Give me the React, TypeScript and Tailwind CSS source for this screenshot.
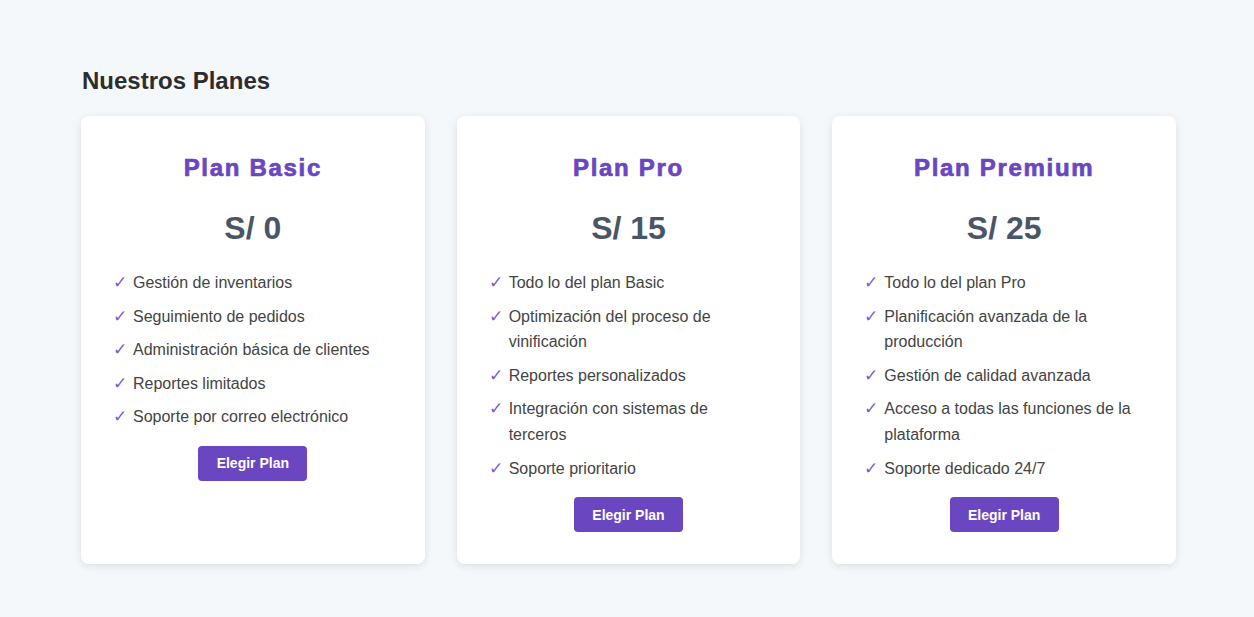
import React from "react";

interface Plan {
    name: string;
    price: string;
    features: string[];
}

const plans: Plan[] = [
    {
        name: "Plan Basic",
        price: "S/ 0",
        features: [
            "Gestión de inventarios",
            "Seguimiento de pedidos",
            "Administración básica de clientes",
            "Reportes limitados",
            "Soporte por correo electrónico",
        ],
    },
    {
        name: "Plan Pro",
        price: "S/ 15",
        features: [
            "Todo lo del plan Basic",
            "Optimización del proceso de vinificación",
            "Reportes personalizados",
            "Integración con sistemas de terceros",
            "Soporte prioritario",
        ],
    },
    {
        name: "Plan Premium",
        price: "S/ 25",
        features: [
            "Todo lo del plan Pro",
            "Planificación avanzada de la producción",
            "Gestión de calidad avanzada",
            "Acceso a todas las funciones de la plataforma",
            "Soporte dedicado 24/7",
        ],
    },
];

const PlanCard = ({ plan }: { plan: Plan }) => {
    return (
        <div className="bg-white rounded-lg shadow-[0_2px_8px_rgba(0,0,0,0.1)] px-8 pt-[38px] pb-8 flex flex-col items-center">
            <h3 className="text-[24px] leading-[28px] font-bold tracking-[1.7px] text-[#6b46c1] [-webkit-text-stroke:0.7px_#6b46c1]">
                {plan.name}
            </h3>
            <div className="mt-[27px] text-[32px] leading-[38px] font-bold text-[#4a5568]">{plan.price}</div>
            <ul className="mt-[23px] w-full">
                {plan.features.map((f) => (
                    <li key={f} className="flex text-[16px] leading-[25.6px] text-[#444] mb-2">
                        <span className="w-5 shrink-0 text-[#7c5cd6] text-[17px] font-['DejaVu_Sans',sans-serif] font-light">✓</span>
                        <span>{f}</span>
                    </li>
                ))}
            </ul>
            <button className="mt-2 bg-[#6b46c1] text-white font-bold text-[14px] leading-[16px] w-[109px] h-[35px] rounded">
                Elegir Plan
            </button>
        </div>
    );
};

export default function App() {
    return (
        <div className="min-h-[617px] bg-[#f5f8fb] pt-[67px] pb-[53px] font-['Liberation_Sans',Arial,sans-serif]">
            <div className="w-[1095px] ml-[81px]">
                <h2 className="text-[24px] leading-[28px] font-bold text-[#2d2d2d] mb-[21px] ml-px">Nuestros Planes</h2>
                <div className="grid grid-cols-3 gap-8 items-stretch">
                    {plans.map((p) => (
                        <PlanCard key={p.name} plan={p} />
                    ))}
                </div>
            </div>
        </div>
    );
}
